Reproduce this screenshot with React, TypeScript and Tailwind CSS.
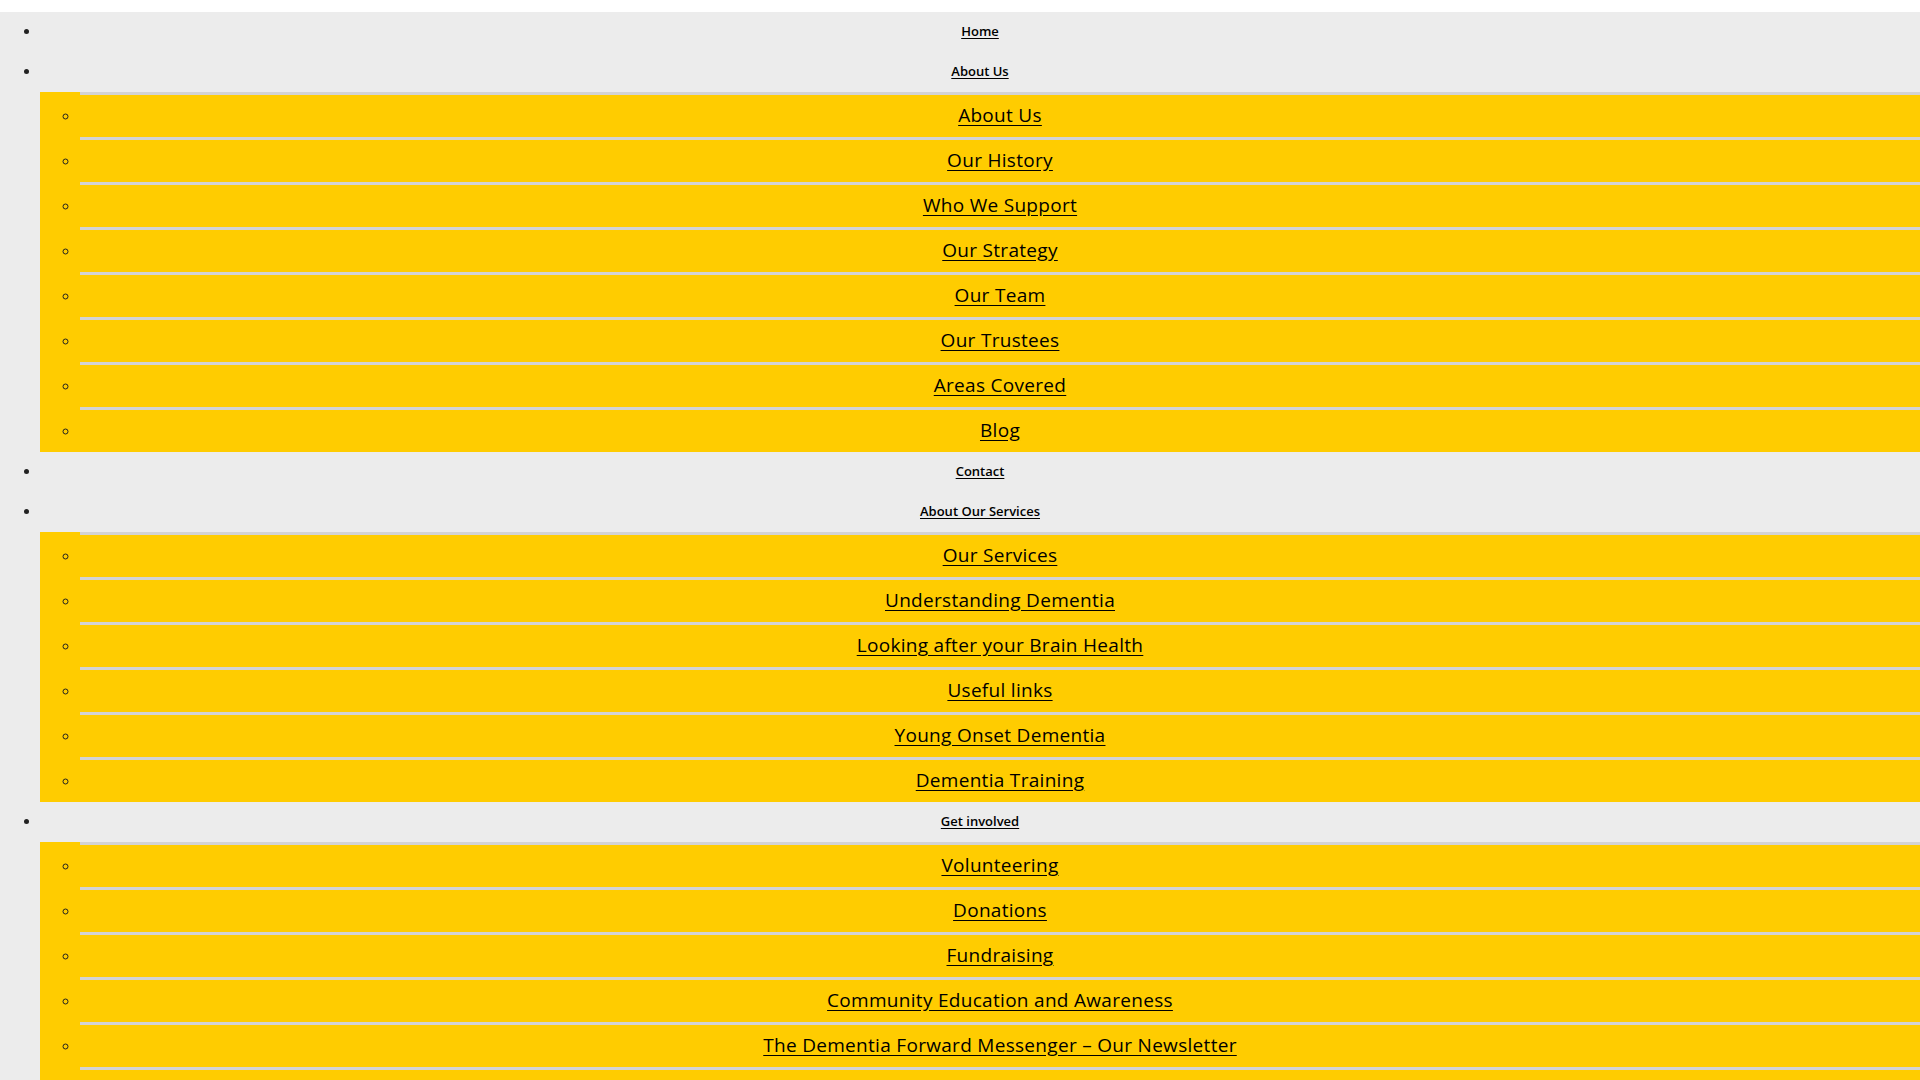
const menu: { label: string; children?: string[] }[] = [
  { label: 'Home' },
  {
    label: 'About Us',
    children: [
      'About Us',
      'Our History',
      'Who We Support',
      'Our Strategy',
      'Our Team',
      'Our Trustees',
      'Areas Covered',
      'Blog',
    ],
  },
  { label: 'Contact' },
  {
    label: 'About Our Services',
    children: [
      'Our Services',
      'Understanding Dementia',
      'Looking after your Brain Health',
      'Useful links',
      'Young Onset Dementia',
      'Dementia Training',
    ],
  },
  {
    label: 'Get involved',
    children: [
      'Volunteering',
      'Donations',
      'Fundraising',
      'Community Education and Awareness',
      'The Dementia Forward Messenger – Our Newsletter',
      'Events',
    ],
  },
];

export default function App() {
  return (
    <div className="h-screen overflow-hidden bg-white pt-3 font-['Open_Sans',sans-serif] text-black">
      <ul className="list-disc bg-[#ececec] pl-10">
        {menu.map((item) => (
          <li key={item.label} className="text-[13px] marker:text-[#222]">
            <a
              href="#"
              className="block h-10 text-center font-semibold leading-[38px] underline underline-offset-2"
            >
              {item.label}
            </a>
            {item.children && (
              <ul className="list-[circle] bg-[#ffcc00] pl-10">
                {item.children.map((child) => (
                  <li
                    key={child}
                    className="border-t-[3px] border-[#d3d3d3] text-[19px] marker:text-[14px] marker:text-[#3a3000]"
                  >
                    <a
                      href="#"
                      className="block h-[42px] text-center leading-[40px] tracking-[0.3px] underline underline-offset-[3px]"
                    >
                      {child}
                    </a>
                  </li>
                ))}
              </ul>
            )}
          </li>
        ))}
      </ul>
    </div>
  );
}
